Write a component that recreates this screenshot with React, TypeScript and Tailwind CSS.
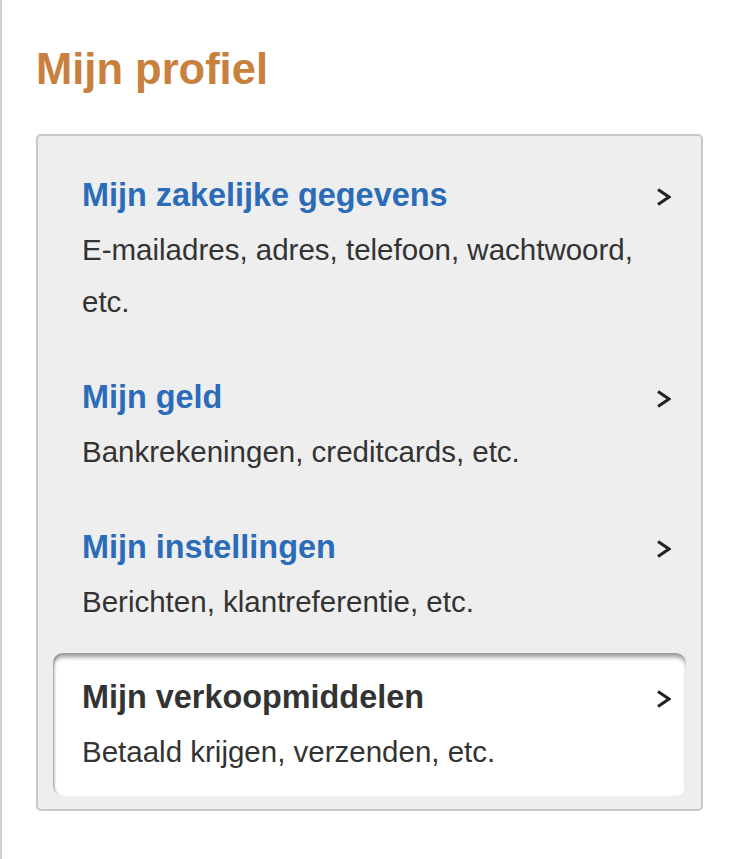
const items = [
  {
    title: 'Mijn zakelijke gegevens',
    desc: 'E-mailadres, adres, telefoon, wachtwoord, etc.',
    active: false,
  },
  { title: 'Mijn geld', desc: 'Bankrekeningen, creditcards, etc.', active: false },
  { title: 'Mijn instellingen', desc: 'Berichten, klantreferentie, etc.', active: false },
  { title: 'Mijn verkoopmiddelen', desc: 'Betaald krijgen, verzenden, etc.', active: true },
];

const Chevron = () => (
  <svg className='w-[15px] h-[18px] text-[#222]' viewBox='0 0 15 18' fill='none' stroke='currentColor' strokeWidth='3'>
    <polyline points='2,1.5 13,9 2,16.5' />
  </svg>
);

export default function App() {
  return (
    <div className="min-h-screen bg-white border-l-2 border-[#cfcfcf] font-['Liberation_Sans',Arial,sans-serif]">
      <div className='pl-[34px] pr-[53px] pt-[44px] pb-[48px]'>
        <h1 className='text-[43.5px] leading-[50px] font-bold text-[#c8803d] mb-[40px]'>Mijn profiel</h1>
        <div className='rounded-[5px] border-[2px] border-[#c8c8c8] bg-[#eeeeee] px-[15px] pt-[15px] pb-[13px] flex flex-col gap-[7px]'>
          {items.map((item) => (
            <div
              key={item.title}
              className={
                item.active
                  ? 'rounded-[10px] bg-white shadow-[inset_0_5px_4px_-1px_rgba(0,0,0,0.4),inset_3px_0_3px_-2px_rgba(0,0,0,0.35)] pl-[29px] pr-[15px] pt-[25px] pb-[18px] flex justify-between items-start'
                  : 'rounded-[10px] pl-[29px] pr-[15px] pt-[25px] pb-[18px] flex justify-between items-start'
              }
            >
              <div className='pr-[10px]'>
                <p className={item.active ? 'text-[32.4px] leading-[38px] font-bold text-[#333333]' : 'text-[32.4px] leading-[38px] font-bold text-[#2b6cb9]'}>
                  {item.title}
                </p>
                <p className='mt-[10px] text-[29.5px] leading-[52px] text-[#333333]'>{item.desc}</p>
              </div>
              <div className='pt-[12px] shrink-0'>
                <Chevron />
              </div>
            </div>
          ))}
        </div>
      </div>
    </div>
  );
}
